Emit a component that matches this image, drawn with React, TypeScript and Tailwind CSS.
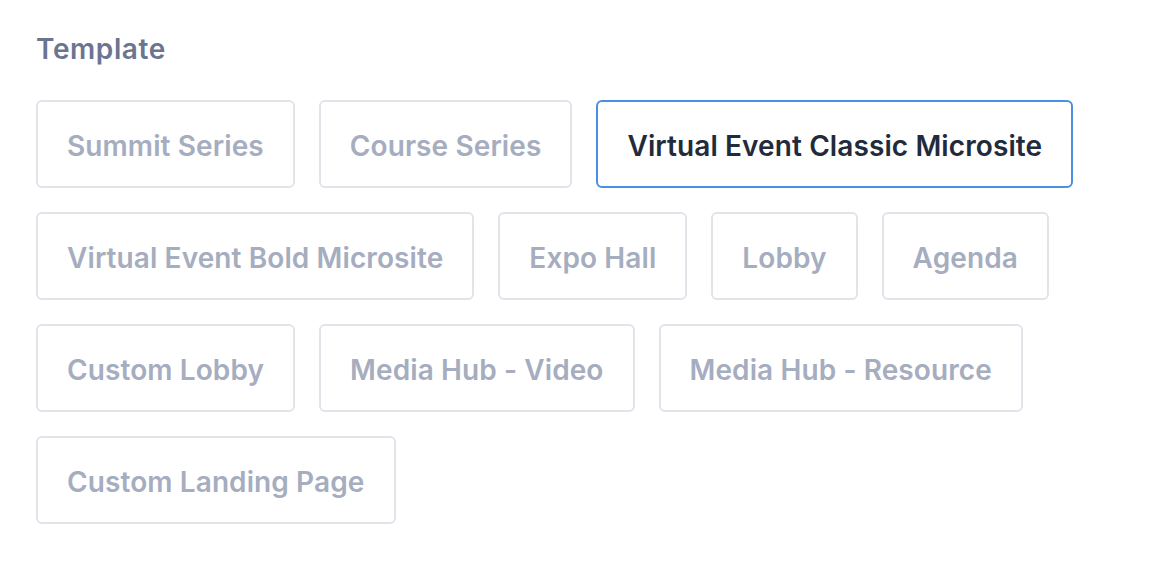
const templates = [
  "Summit Series",
  "Course Series",
  "Virtual Event Classic Microsite",
  "Virtual Event Bold Microsite",
  "Expo Hall",
  "Lobby",
  "Agenda",
  "Custom Lobby",
  "Media Hub - Video",
  "Media Hub - Resource",
  "Custom Landing Page",
];

export default function App() {
  const selected = "Virtual Event Classic Microsite";
  return (
    <div className="min-h-screen bg-white px-[36px] pt-[32px] font-['Inter',sans-serif]">
      <h2 className="text-[28px] font-semibold leading-[34px] text-[#6b7592] tracking-[0.6px]">
        Template
      </h2>
      <div className="mt-[34px] flex max-w-[1050px] flex-wrap gap-[24px]">
        {templates.map((t) => (
          <button
            key={t}
            className={
              t === selected
                ? "flex h-[88px] items-center rounded-[6px] border-2 border-[#4a90e2] bg-white px-[29px] pt-[4px] text-[28px] font-semibold text-[#222b3c] tracking-[0.1px]"
                : "flex h-[88px] items-center rounded-[6px] border-2 border-[#e2e4ea] bg-white px-[29px] pt-[4px] text-[28px] font-semibold text-[#a5adbf] tracking-[0.1px]"
            }
          >
            {t}
          </button>
        ))}
      </div>
    </div>
  );
}
